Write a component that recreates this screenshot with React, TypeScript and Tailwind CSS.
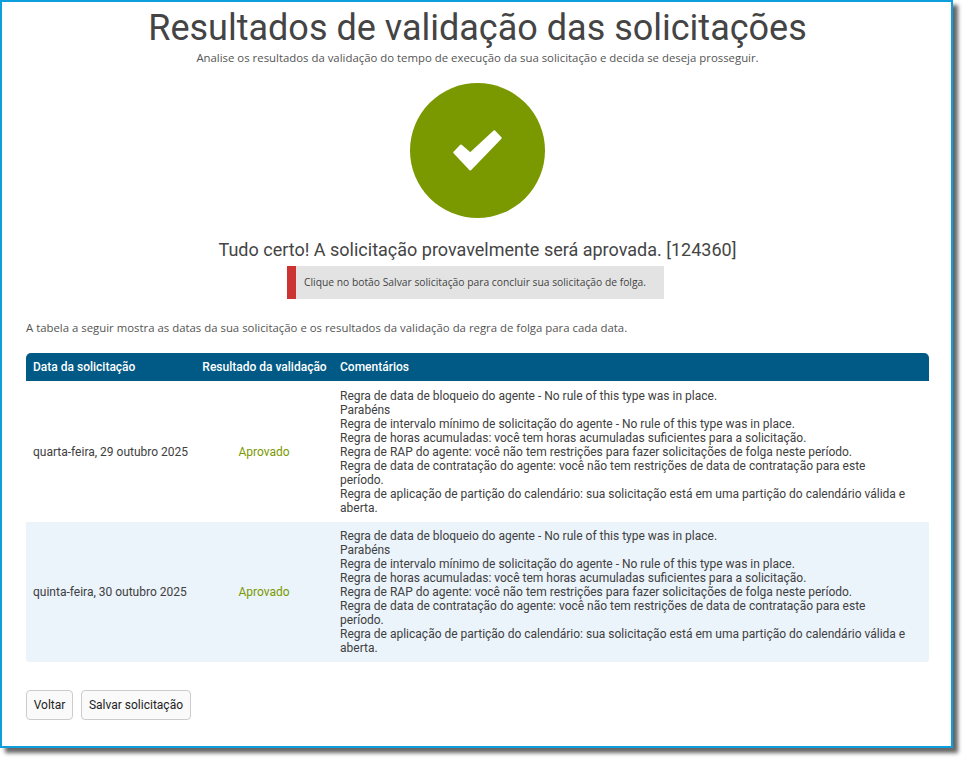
const comments = [
  "Regra de data de bloqueio do agente - No rule of this type was in place.",
  "Parabéns",
  "Regra de intervalo mínimo de solicitação do agente - No rule of this type was in place.",
  "Regra de horas acumuladas: você tem horas acumuladas suficientes para a solicitação.",
  "Regra de RAP do agente: você não tem restrições para fazer solicitações de folga neste período.",
  "Regra de data de contratação do agente: você não tem restrições de data de contratação para este período.",
  "Regra de aplicação de partição do calendário: sua solicitação está em uma partição do calendário válida e aberta.",
];

const rows = [
  { date: "quarta-feira, 29 outubro 2025", shaded: false },
  { date: "quinta-feira, 30 outubro 2025", shaded: true },
];

export default function App() {
  return (
    <div className="h-[762px] w-[967px] overflow-hidden bg-white font-['Roboto',sans-serif]">
      <div className="flex h-[748px] w-[953px] flex-col border-2 border-[#0d9fdd] bg-white pl-6 pr-[22px] shadow-[5px_5px_4px_rgba(0,0,0,0.6)]">
        <h1 className="mt-[4px] h-[44px] text-center text-[36px] leading-[44px] font-normal text-[#444444]">
          Resultados de validação das solicitações
        </h1>
        <p className="text-center font-['Open_Sans',sans-serif] text-[11.38px] leading-[16px] text-[#555555]">
          Analise os resultados da validação do tempo de execução da sua solicitação e decida se deseja prosseguir.
        </p>

        <div className="mt-[17px] flex justify-center">
          <div className="flex h-[135px] w-[135px] items-center justify-center rounded-full bg-[#7a9900]">
            <svg width="49" height="41" viewBox="0 0 49 41" aria-hidden="true">
              <path
                d="M1.3 22.5 L8 15.5 L17.3 23.5 L41.3 1.2 L47.7 8 L17.3 39.5 Z"
                fill="#ffffff"
                stroke="#ffffff"
                strokeWidth="2"
                strokeLinejoin="round"
              />
            </svg>
          </div>
        </div>

        <h2 className="mt-[20px] text-center text-[18px] leading-[24px] font-normal text-[#444444]">
          Tudo certo! A solicitação provavelmente será aprovada. [124360]
        </h2>

        <div className="mt-[4px] flex justify-center pr-[4px]">
          <div className="flex h-[33px] w-[377px] items-center border-l-[9px] border-[#cc3333] bg-[#e3e3e3] pl-[8px] font-['Open_Sans',sans-serif] text-[10.3px] text-[#444444]">
            Clique no botão Salvar solicitação para concluir sua solicitação de folga.
          </div>
        </div>

        <p className="mt-[21px] font-['Open_Sans',sans-serif] text-[11.38px] leading-[16px] text-[#555555]">
          A tabela a seguir mostra as datas da sua solicitação e os resultados da validação da regra de folga para cada data.
        </p>

        <div className="mt-[17px]">
          <div className="flex h-[28px] items-center rounded-t-[5px] bg-[#005a85] text-[12px] font-medium text-white">
            <div className="w-[169px] pl-[7px]">Data da solicitação</div>
            <div className="w-[138px] pl-px text-center">Resultado da validação</div>
            <div className="pl-[7px]">Comentários</div>
          </div>
          {rows.map((row) => (
            <div
              key={row.date}
              className={`flex items-center rounded-b-[3px] text-[12px] leading-[14px] text-[#404040] ${row.shaded ? "h-[140px] bg-[#ebf3fb]" : "h-[141px] bg-white"}`}
            >
              <div className="w-[169px] pl-[7px]">{row.date}</div>
              <div className="w-[138px] text-center text-[#7a9900]">Aprovado</div>
              <div className="w-[589px] pr-[10px] pl-[7px]">
                {comments.map((line) => (
                  <div key={line}>{line}</div>
                ))}
              </div>
            </div>
          ))}
        </div>

        <div className="mt-[28px] flex gap-2">
          <button className="h-[30px] w-[47px] rounded-[4px] border border-[#cccccc] bg-[#fafafa] text-[12px] text-[#222222]">
            Voltar
          </button>
          <button className="h-[30px] w-[110px] rounded-[4px] border border-[#cccccc] bg-[#fafafa] text-[12px] text-[#222222]">
            Salvar solicitação
          </button>
        </div>
      </div>
    </div>
  );
}
